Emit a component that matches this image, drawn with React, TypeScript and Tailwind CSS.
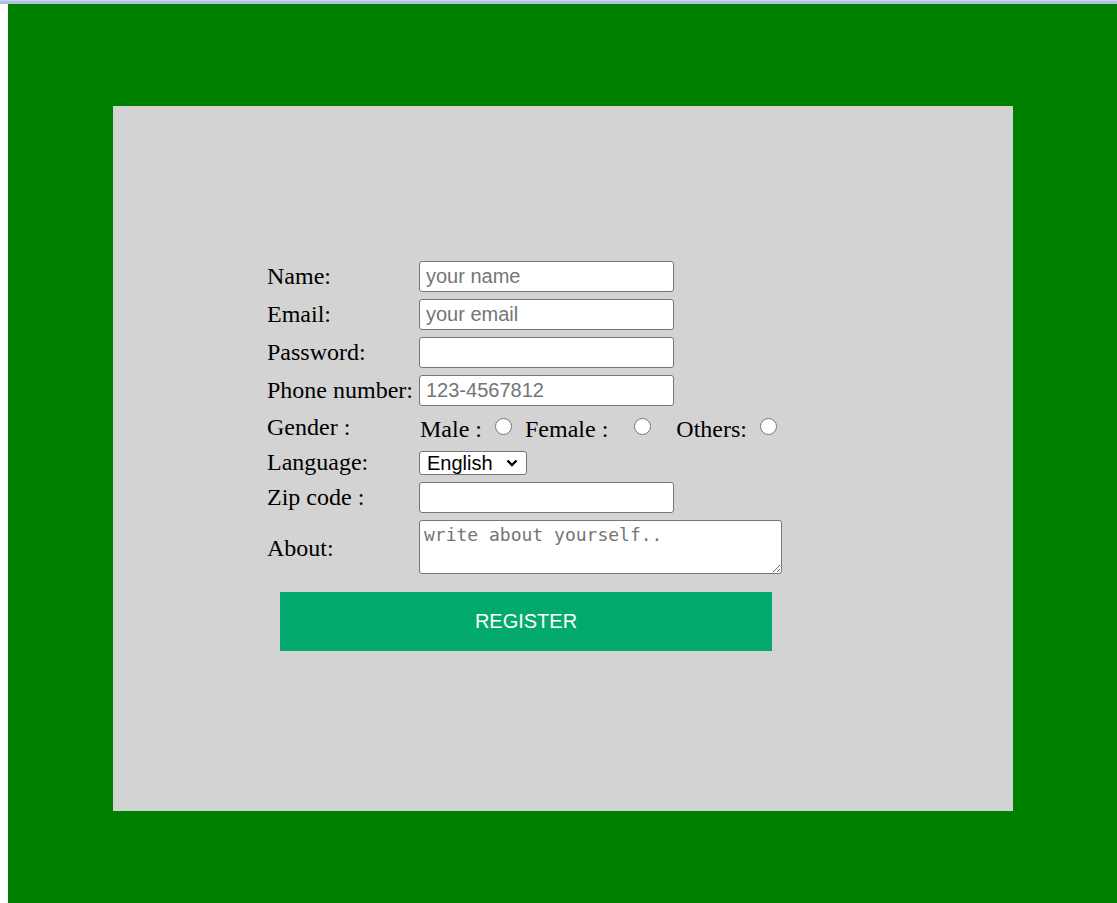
import React from "react";

const serif = { fontFamily: '"Liberation Serif", "Times New Roman", serif' };

function Radio({ className = "" }: { className?: string }) {
  return (
    <span
      className={
        "inline-block w-[17px] h-[17px] rounded-full border-[1.5px] border-[#767676] bg-white shrink-0 " +
        className
      }
    />
  );
}

function TextInput({ placeholder = "", type = "text" }: { placeholder?: string; type?: string }) {
  return (
    <input
      type={type}
      placeholder={placeholder}
      className="w-[255px] h-[31px] border border-[#767676] rounded-[3px] bg-white px-[6px] text-[20px] text-black placeholder:text-[#757575] outline-none font-['Liberation_Sans',Arial,sans-serif]"
    />
  );
}

function Row({ label, children, h = 31, labelClass = "-mt-[2px]" }: { label: string; children: React.ReactNode; h?: number; labelClass?: string }) {
  return (
    <div className="flex items-center" style={{ height: h }}>
      <div className={"w-[152px] shrink-0 text-[24px] leading-none text-black " + labelClass} style={serif}>
        {label}
      </div>
      <div className="flex items-center">{children}</div>
    </div>
  );
}

export default function App() {
  return (
    <div className="w-[1117px] h-[903px] bg-white overflow-hidden">
      <div className="h-px bg-[#c9d5ee]" />
      <div className="h-[3px] bg-[#b0c0df]" />
      <div className="ml-[8px] h-[899px] bg-[#008000] pt-[102px]">
        <div className="ml-[105px] w-[900px] h-[705px] bg-[#d3d3d3] pl-[154px] pt-[155px]">
          <div className="flex flex-col gap-[7px]">
            <Row label="Name:">
              <TextInput placeholder="your name" />
            </Row>
            <Row label="Email:">
              <TextInput placeholder="your email" />
            </Row>
            <Row label="Password:">
              <TextInput type="password" />
            </Row>
            <Row label="Phone number:">
              <TextInput placeholder="123-4567812" />
            </Row>
            <Row label="Gender :" h={30} labelClass="-mt-[3px]">
              <div className="flex items-center text-[24px] leading-none text-black pt-[1px]" style={serif}>
                <span className="ml-[1px]">Male :</span>
                <Radio className="ml-[13px] -mt-[4px]" />
                <span className="ml-[13px]">Female :</span>
                <Radio className="ml-[26px] -mt-[4px]" />
                <span className="ml-[25px]">Others:</span>
                <Radio className="ml-[13px] -mt-[4px]" />
              </div>
            </Row>
            <Row label="Language:" h={25} labelClass="-mt-[1px]">
              <div className="w-[108px] h-[24px] border border-[#767676] rounded-[3px] bg-white flex items-center pl-[7px] pr-[8px] justify-between">
                <span className="text-[20px] leading-none text-black font-['Liberation_Sans',Arial,sans-serif]">English</span>
                <svg width="12" height="8" viewBox="0 0 12 8" fill="none">
                  <path d="M1.5 1.5 L6 6 L10.5 1.5" stroke="#000" strokeWidth="2.4" />
                </svg>
              </div>
            </Row>
            <Row label="Zip code :">
              <TextInput />
            </Row>
            <Row label="About:" h={54} labelClass="mt-[2px]">
              <textarea
                placeholder="write about yourself.."
                className="w-[363px] h-[54px] border border-[#767676] rounded-[3px] bg-white px-[4px] py-[3px] text-[18px] leading-[22px] text-black placeholder:text-[#757575] outline-none font-['DejaVu_Sans_Mono',monospace]"
              />
            </Row>
          </div>
          <button className="mt-[18px] ml-[13px] w-[492px] h-[59px] bg-[#04aa6d] text-white text-[20px] font-['Liberation_Sans',Arial,sans-serif] pb-[2px]">
            REGISTER
          </button>
        </div>
      </div>
    </div>
  );
}
